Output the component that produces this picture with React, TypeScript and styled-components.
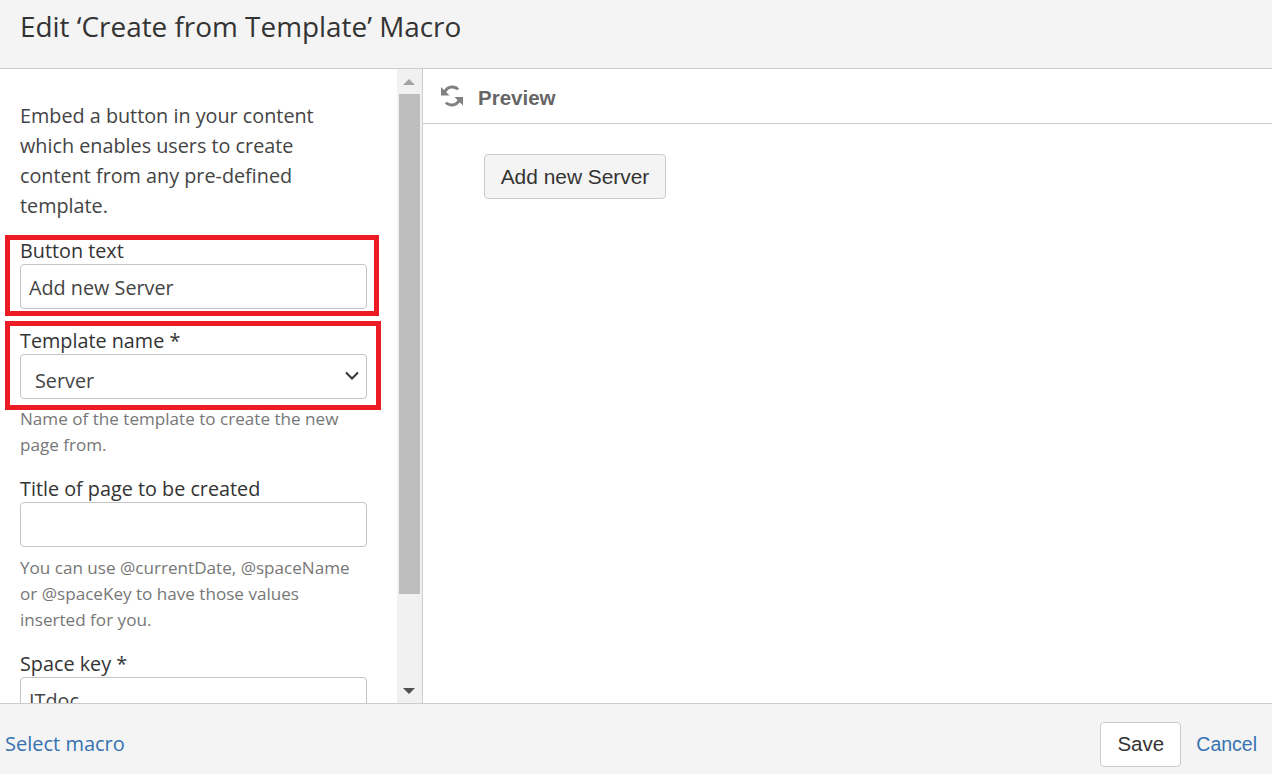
import React from 'react';
import styled, { createGlobalStyle } from 'styled-components';

const GlobalStyle = createGlobalStyle`
  html, body {
    margin: 0;
    padding: 0;
    height: 100%;
    overflow: hidden;
    background: #fff;
  }
  #root {
    height: 100%;
  }
  * {
    box-sizing: border-box;
  }
`;

const Dialog = styled.div`
  display: flex;
  flex-direction: column;
  height: 774px;
  font-family: "Open Sans", "Noto Sans", sans-serif;
  color: #333;
`;

const Header = styled.header`
  height: 69px;
  flex: none;
  background: #f4f4f4;
  border-bottom: 1px solid #ccc;
  padding: 8px 20px 0;
`;

const Title = styled.h1`
  margin: 0;
  font-size: 27.9px;
  line-height: 36px;
  font-weight: 400;
  color: #333;
`;

const Body = styled.div`
  flex: 1;
  min-height: 0;
  display: flex;
`;

const Sidebar = styled.div`
  width: 423px;
  flex: none;
  display: flex;
  border-right: 1px solid #ccc;
`;

const FormPane = styled.div`
  width: 397px;
  flex: none;
  overflow: hidden;
  padding: 32px 30px 0 20px;
`;

const Description = styled.p`
  margin: 0 0 17px;
  font-size: 19.8px;
  line-height: 30px;
  color: #444;
`;

const Field = styled.div<{ $gap?: number }>`
  margin-bottom: ${(p) => p.$gap ?? 18}px;
`;

// the red annotation frame lies over the label and its control
const Marked = styled.div<{ $tall?: boolean }>`
  position: relative;
  &::after {
    content: '';
    position: absolute;
    top: ${(p) => (p.$tall ? -7 : -3)}px;
    bottom: ${(p) => (p.$tall ? -11 : -7)}px;
    left: -15px;
    right: ${(p) => (p.$tall ? -14 : -12)}px;
    border: 5px solid #ed1c24;
    pointer-events: none;
  }
`;

const Label = styled.label`
  display: block;
  font-size: 19.8px;
  line-height: 26px;
  color: #333;
`;

const TextInput = styled.div`
  height: 45px;
  border: 1px solid #c4c4c4;
  border-radius: 4px;
  background: #fff;
  padding: 0 8px;
  font-size: 19.8px;
  line-height: 45px;
  color: #444;
`;

const SelectBox = styled(TextInput)`
  display: flex;
  align-items: center;
  justify-content: space-between;
  padding: 0 7px 0 14px;
`;

const SelectValue = styled.span`
  padding-top: 8px;
`;

const Chevron = styled.svg`
  width: 14px;
  height: 9px;
  margin-top: -3px;
  fill: none;
  stroke: #333;
  stroke-width: 2;
`;

const Help = styled.div<{ $tight?: boolean }>`
  margin-top: ${(p) => (p.$tight ? 7 : 8)}px;
  font-size: 17.1px;
  line-height: 26px;
  color: #777;
`;

const Scrollbar = styled.div`
  width: 25px;
  flex: none;
  display: flex;
  flex-direction: column;
  background: #f1f1f1;
  padding-right: 2px;
`;

const ScrollArrow = styled.div<{ $down?: boolean }>`
  height: 25px;
  flex: none;
  display: flex;
  align-items: center;
  justify-content: center;
  &::before {
    content: '';
    width: 0;
    height: 0;
    border-left: 6px solid transparent;
    border-right: 6px solid transparent;
    ${(p) =>
      p.$down
        ? 'border-top: 6px solid #505050;'
        : 'border-bottom: 6px solid #a3a3a3;'}
  }
`;

const ScrollThumb = styled.div`
  height: 500px;
  flex: none;
  margin-left: 2px;
  background: #bdbdbd;
`;

const ScrollRest = styled.div`
  flex: 1;
`;

const PreviewPane = styled.main`
  flex: 1;
  min-width: 0;
`;

const PreviewBar = styled.div`
  height: 55px;
  display: flex;
  align-items: center;
  gap: 14px;
  padding-left: 17px;
  border-bottom: 1px solid #ccc;
`;

const PreviewTitle = styled.span`
  padding-top: 3px;
  font-family: "Liberation Sans", Arial, sans-serif;
  font-weight: 700;
  font-size: 20.5px;
  color: #666;
`;

const PreviewContent = styled.div`
  padding: 30px 61px;
`;

const Button = styled.button`
  height: 45px;
  width: 182px;
  padding: 0;
  border: 1px solid #ccc;
  border-radius: 4px;
  background: #f4f4f4;
  font-family: "Liberation Sans", Arial, sans-serif;
  font-size: 20.9px;
  color: #333;
`;

const SaveButton = styled(Button)`
  background: #fff;
  font-size: 20.5px;
  width: 81px;
`;

const Footer = styled.footer`
  height: 71px;
  flex: none;
  display: flex;
  align-items: center;
  justify-content: space-between;
  padding: 10px 15px 0 5px;
  background: #f4f4f4;
  border-top: 1px solid #ccc;
`;

const FooterActions = styled.div`
  display: flex;
  align-items: center;
  gap: 15px;
`;

const LinkText = styled.a`
  font-size: 20px;
  color: #3572b0;
`;

const SelectLink = styled(LinkText)`
  margin-top: -2px;
`;

const CancelLink = styled(LinkText)`
  font-family: "Liberation Sans", Arial, sans-serif;
  font-size: 19.5px;
`;

const RefreshIcon = () => (
  <svg width="24" height="26" viewBox="0 0 24 26" fill="none">
    <path d="M4 11 C5 6 9 3.5 13 4 C15 4.3 17 5 18 6.5" stroke="#808080" strokeWidth="3" />
    <path d="M1 4 L1 12.5 L9.5 12.5 Z" fill="#808080" />
    <path d="M20 15 C19 20 15 22.5 11 22 C9 21.7 7 21 6 19.5" stroke="#808080" strokeWidth="3" />
    <path d="M23 22.5 L23 14 L14.5 14 Z" fill="#808080" />
  </svg>
);

const App: React.FC = () => {
  return (
    <Dialog>
      <GlobalStyle />
      <Header>
        <Title>Edit ‘Create from Template’ Macro</Title>
      </Header>
      <Body>
        <Sidebar>
          <FormPane>
            <Description>
              Embed a button in your content which enables users to create content from any
              pre-defined template.
            </Description>
            <Field $gap={19}>
              <Marked>
                <Label>Button text</Label>
                <TextInput>Add new Server</TextInput>
              </Marked>
            </Field>
            <Field>
              <Marked $tall>
                <Label>Template name *</Label>
                <SelectBox>
                  <SelectValue>Server</SelectValue>
                  <Chevron viewBox="0 0 14 9">
                    <path d="M1 1.5 L7 7.5 L13 1.5" />
                  </Chevron>
                </SelectBox>
              </Marked>
              <Help $tight>Name of the template to create the new page from.</Help>
            </Field>
            <Field>
              <Label>Title of page to be created</Label>
              <TextInput />
              <Help>You can use @currentDate, @spaceName or @spaceKey to have those values inserted for you.</Help>
            </Field>
            <Field>
              <Label>Space key *</Label>
              <TextInput>ITdoc</TextInput>
            </Field>
          </FormPane>
          <Scrollbar>
            <ScrollArrow />
            <ScrollThumb />
            <ScrollRest />
            <ScrollArrow $down />
          </Scrollbar>
        </Sidebar>
        <PreviewPane>
          <PreviewBar>
            <RefreshIcon />
            <PreviewTitle>Preview</PreviewTitle>
          </PreviewBar>
          <PreviewContent>
            <Button>Add new Server</Button>
          </PreviewContent>
        </PreviewPane>
      </Body>
      <Footer>
        <SelectLink>Select macro</SelectLink>
        <FooterActions>
          <SaveButton>Save</SaveButton>
          <CancelLink>Cancel</CancelLink>
        </FooterActions>
      </Footer>
    </Dialog>
  );
};

export default App;
